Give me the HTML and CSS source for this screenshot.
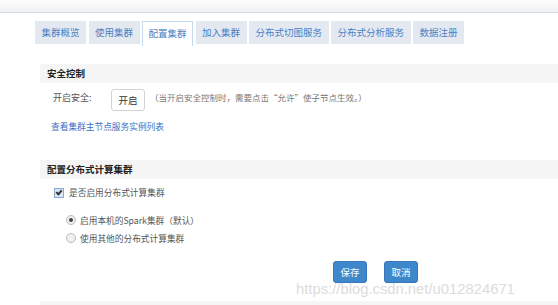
FILE: index.html
```html
<!DOCTYPE html>
<html lang="zh-CN">
<head>
  <meta charset="UTF-8" />
  <title>配置集群</title>
  <link rel="stylesheet" href="styles.css">
</head>
<body>

  <!-- top strip -->
  <div class="topbar"></div>

  <!-- tabs -->
  <ul class="tabs">
    <li class="tab">集群概览</li>
    <li class="tab">使用集群</li>
    <li class="tab active">配置集群</li>
    <li class="tab">加入集群</li>
    <li class="tab">分布式切图服务</li>
    <li class="tab">分布式分析服务</li>
    <li class="tab">数据注册</li>
  </ul>

  <div class="content">
    <!-- security -->
    <div class="section-title">安全控制</div>
    <div class="row">
      <span class="row-label">开启安全:</span>
      <button class="btn-plain">开启</button>
      <span class="hint">（当开启安全控制时，需要点击“允许”使子节点生效。）</span>
    </div>
    <a href="#" class="link">查看集群主节点服务实例列表</a>

    <!-- distributed -->
    <div class="section-title second">配置分布式计算集群</div>
    <label class="check-row">
      <span class="checkbox"></span>
      <span>是否启用分布式计算集群</span>
    </label>
    <div class="radios">
      <label class="radio-row"><span class="radio on"></span>启用本机的Spark集群（默认）</label>
      <label class="radio-row"><span class="radio"></span>使用其他的分布式计算集群</label>
    </div>

    <div class="actions">
      <button class="btn-primary">保存</button>
      <button class="btn-primary">取消</button>
      <div class="watermark">https://blog.csdn.net/u012824671</div>
    </div>
    <div class="footer-bar"></div>
  </div>

</body>
</html>
```

FILE: styles.css
```css
body {
  margin: 0;
  background: #fff;
  font-family: "Noto Sans CJK SC", "Liberation Sans", sans-serif;
  font-size: 8.7px;
  color: #555;
  overflow: hidden;
}

.topbar {
  height: 12px;
  background: linear-gradient(#fdfdfd, #eef0f3);
  border-bottom: 1px solid #d7dde5;
}

.tabs {
  list-style: none;
  margin: 8px 0 0 0;
  padding: 0 0 0 35px;
  display: flex;
  gap: 2.5px;
  height: 24px;
}

.tab {
  background: #e4e9f1;
  color: #4b7fc4;
  font-size: 9.5px;
  height: 23px;
  line-height: 23px;
  padding: 0 6.5px;
}

.tab.active {
  background: #fff;
  border: 1px solid #c5daef;
  border-bottom: none;
  height: 24px;
  line-height: 23px;
  padding: 0 5.5px;
}

.content {
  margin-left: 40px;
}

.section-title {
  margin-top: 19px;
  height: 19px;
  line-height: 19px;
  background: #f5f5f5;
  padding-left: 7px;
  font-weight: bold;
  font-size: 9.5px;
  color: #222;
}

.section-title.second {
  margin-top: 27px;
}

.row {
  display: flex;
  align-items: center;
  margin-top: 6px;
  padding-left: 13px;
  height: 22px;
}

.row-label {
  width: 58px;
  margin-top: -6px;
  font-size: 9px;
}

.btn-plain {
  background: #fff;
  border: 1px solid #d3d3d3;
  border-radius: 3px;
  height: 22px;
  width: 34px;
  padding: 0;
  font-family: inherit;
  font-size: 9.5px;
  color: #333;
}

.hint {
  margin-left: 5px;
  color: #777;
  font-size: 8.5px;
  margin-top: -6px;
}

.link {
  display: block;
  margin: 9px 0 0 11px;
  color: #3a6fc4;
  text-decoration: none;
}

.check-row {
  display: flex;
  align-items: center;
  margin: 7px 0 0 14px;
  gap: 5px;
}

.checkbox {
  width: 8px;
  height: 8px;
  border: 1px solid #8aa9cf;
  background: #dbe6f4;
  position: relative;
}

.checkbox::after {
  content: "";
  position: absolute;
  left: 2px;
  top: 0px;
  width: 2px;
  height: 4px;
  border: solid #333;
  border-width: 0 2px 2px 0;
  transform: rotate(40deg);
}

.radios {
  margin: 12px 0 0 26px;
  display: flex;
  flex-direction: column;
}

.radio-row {
  display: flex;
  align-items: center;
  gap: 4px;
  height: 18px;
}

.radio {
  width: 8px;
  height: 8px;
  border-radius: 50%;
  border: 1px solid #bbb;
  background: #f0f0f0;
  position: relative;
}

.radio.on::after {
  content: "";
  position: absolute;
  left: 2px;
  top: 2px;
  width: 4px;
  height: 4px;
  border-radius: 50%;
  background: #444;
}

.actions {
  display: flex;
  gap: 17px;
  margin: 14px 0 0 293px;
  position: relative;
}

.btn-primary {
  background: #3e87cb;
  border: 1px solid #3577b8;
  border-radius: 3px;
  color: #fff;
  font-family: inherit;
  font-size: 9.5px;
  width: 34px;
  height: 22px;
  padding: 0;
}

.watermark {
  position: absolute;
  left: -37px;
  top: 20px;
  font-family: "Liberation Sans", sans-serif;
  font-size: 14.8px;
  color: #dcdcdc;
  pointer-events: none;
  white-space: nowrap;
}

.footer-bar {
  margin-top: 18px;
  height: 10px;
  background: #f5f5f5;
}
```
